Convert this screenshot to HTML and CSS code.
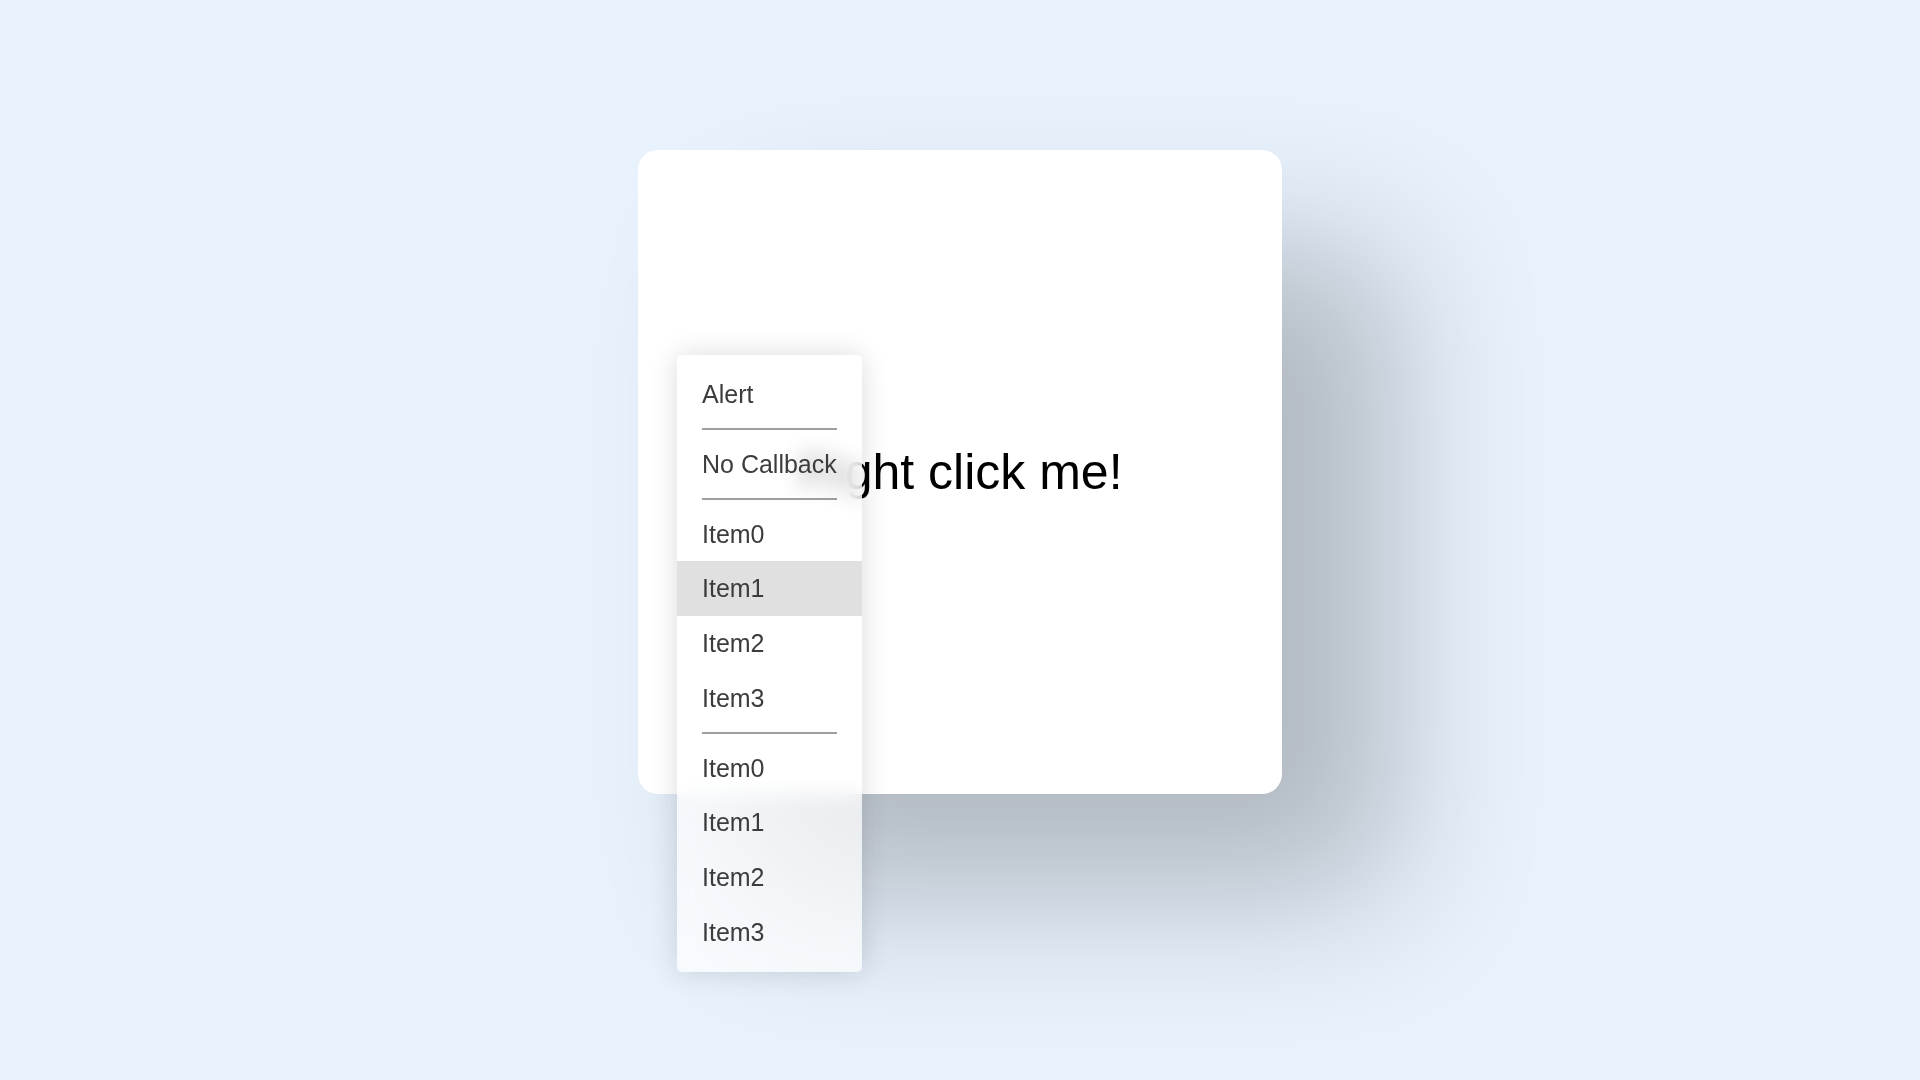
FILE: index.html
```html
<!DOCTYPE html>
<html lang="en">
<head>
<meta charset="utf-8">
<title>Context menu</title>
<link rel="stylesheet" href="styles.css">
</head>
<body>
  <main class="stage">
    <div class="card">
      <p class="card-label">Right click me!</p>
    </div>
  </main>
  <ul class="context-menu">
    <li class="menu-item">Alert</li>
    <li class="menu-sep"></li>
    <li class="menu-item">No Callback</li>
    <li class="menu-sep"></li>
    <li class="menu-item">Item0</li>
    <li class="menu-item is-hover">Item1</li>
    <li class="menu-item">Item2</li>
    <li class="menu-item">Item3</li>
    <li class="menu-sep"></li>
    <li class="menu-item">Item0</li>
    <li class="menu-item">Item1</li>
    <li class="menu-item">Item2</li>
    <li class="menu-item">Item3</li>
  </ul>
</body>
</html>
```

FILE: styles.css
```css
html, body {
  margin: 0;
  padding: 0;
  height: 100%;
}

body {
  background: #e8f2fd;
  font-family: "Liberation Sans", Arial, sans-serif;
  overflow: hidden;
  position: relative;
}

.stage {
  display: flex;
  justify-content: center;
  padding-top: 150px;
}

.card {
  width: 644px;
  height: 644px;
  background: #ffffff;
  border-radius: 20px;
  box-shadow: 110px 100px 150px rgba(0, 0, 0, 0.24);
  display: flex;
  align-items: center;
  justify-content: center;
}

.card-label {
  margin: 0;
  font-size: 50px;
  color: #000000;
}

.context-menu {
  position: absolute;
  left: 677px;
  top: 355px;
  margin: 0;
  padding: 12px 0;
  list-style: none;
  background: rgba(255, 255, 255, 0.7);
  -webkit-backdrop-filter: blur(10px);
  backdrop-filter: blur(10px);
  border-radius: 5px;
  box-shadow: 0 0 28px rgba(0, 0, 0, 0.14);
  font-size: 25px;
  color: #3c3c3c;
}

.menu-item {
  height: 54.75px;
  line-height: 54.75px;
  padding: 0 25px;
  white-space: nowrap;
}

.menu-item.is-hover {
  background: #e0e0e0;
}

.menu-sep {
  height: 0;
  border-top: 2px solid #9e9e9e;
  margin: 6.5px 25px;
}
```
